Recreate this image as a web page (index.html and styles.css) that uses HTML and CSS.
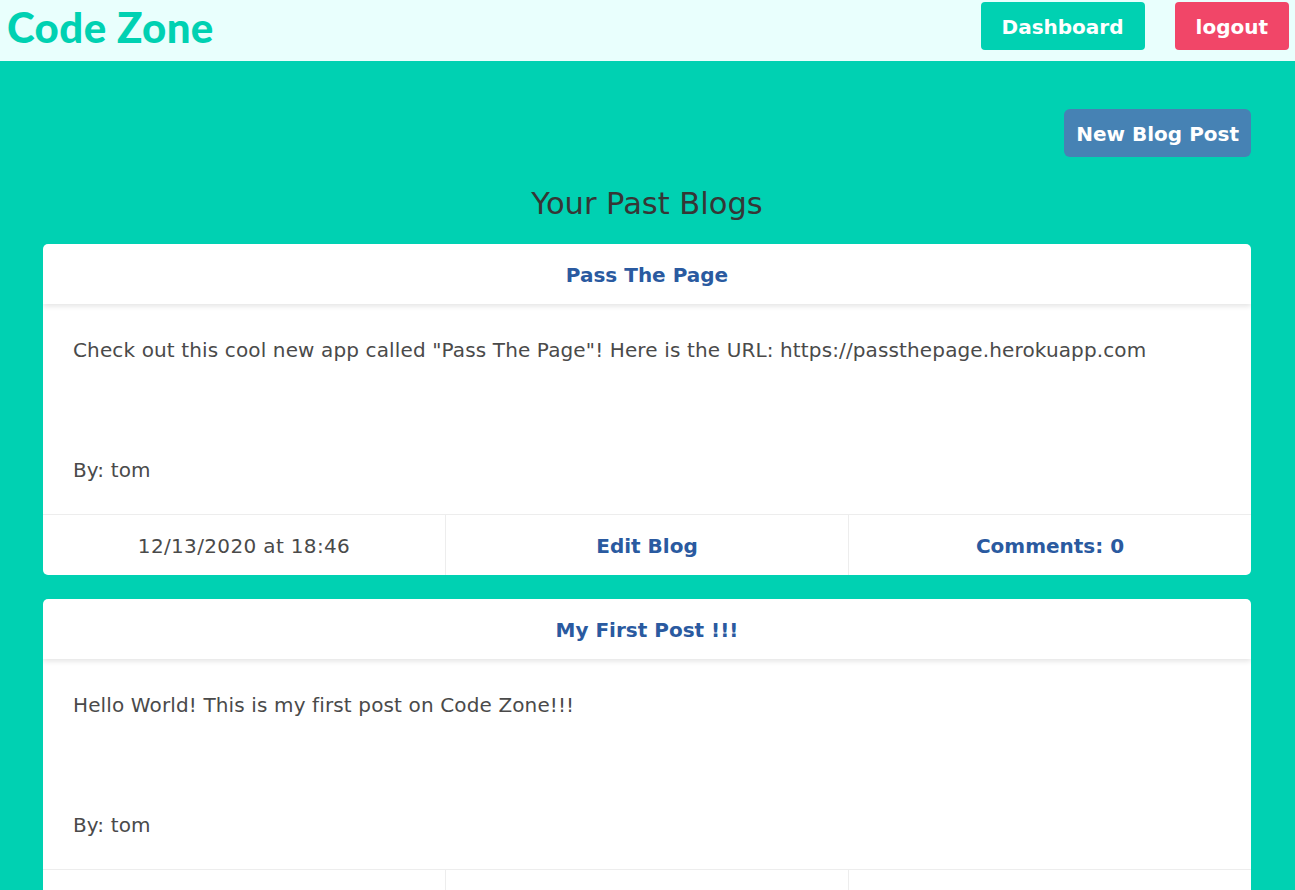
FILE: index.html
```html
<!DOCTYPE html>
<html lang="en">
<head>
<meta charset="utf-8">
<title>Code Zone</title>
<link rel="stylesheet" href="styles.css">
</head>
<body>
<nav class="navbar">
  <a class="brand" href="#">Code Zone</a>
  <div class="nav-actions">
    <a class="btn btn-primary" href="#">Dashboard</a>
    <a class="btn btn-danger" href="#">logout</a>
  </div>
</nav>
<main class="main">
  <div class="toolbar">
    <a class="btn btn-steel" href="#">New Blog Post</a>
  </div>
  <h1 class="page-title">Your Past Blogs</h1>
  <div class="cards">
    <article class="card">
      <header class="card-header">Pass The Page</header>
      <div class="card-content">
        <p class="post-body">Check out this cool new app called "Pass The Page"! Here is the URL: https://passthepage.herokuapp.com</p>
        <p class="post-author">By: tom</p>
      </div>
      <footer class="card-footer">
        <span class="footer-item">12/13/2020 at 18:46</span>
        <a class="footer-item link" href="#">Edit Blog</a>
        <a class="footer-item link" href="#">Comments: 0</a>
      </footer>
    </article>
    <article class="card">
      <header class="card-header">My First Post !!!</header>
      <div class="card-content">
        <p class="post-body">Hello World! This is my first post on Code Zone!!!</p>
        <p class="post-author">By: tom</p>
      </div>
      <footer class="card-footer">
        <span class="footer-item">12/13/2020 at 18:40</span>
        <a class="footer-item link" href="#">Edit Blog</a>
        <a class="footer-item link" href="#">Comments: 0</a>
      </footer>
    </article>
  </div>
</main>
</body>
</html>
```
FILE: styles.css
```css
html, body {
  margin: 0;
  padding: 0;
}
body {
  font-family: "DejaVu Sans", Verdana, sans-serif;
  font-size: 20px;
  line-height: 1.5;
  color: #4a4a4a;
  background: #00d1b2;
  height: 890px;
  overflow: hidden;
}
a { text-decoration: none; }

.navbar {
  height: 61px;
  box-sizing: border-box;
  background: #e9fffd;
  display: flex;
  justify-content: space-between;
  align-items: flex-start;
  padding: 0 6px 0 7px;
}
.brand {
  font-family: Lato, "DejaVu Sans", sans-serif;
  font-weight: 900;
  font-size: 42px;
  line-height: 54px;
  color: #00d1b2;
  letter-spacing: 0.4px;
}
.nav-actions {
  display: flex;
  gap: 30px;
  padding-top: 2px;
}
.btn {
  display: inline-flex;
  align-items: center;
  justify-content: center;
  height: 48px;
  box-sizing: border-box;
  border-radius: 4px;
  color: #fff;
  font-weight: 700;
  font-size: 20px;
  padding: 1px 21px 0;
}
.btn-primary { background: #00d1b2; }
.btn-danger { background: #f14668; }
.btn-steel { background: #4682b4; border-radius: 6px; padding: 2px 12px 0; }

.main {
  padding: 48px 44px 0 43px;
}
.toolbar {
  display: flex;
  justify-content: flex-end;
}
.page-title {
  margin: 25px 0 0;
  text-align: center;
  font-weight: 400;
  font-size: 30.5px;
  line-height: 44px;
  color: #363636;
}
.cards {
  margin-top: 18px;
  display: flex;
  flex-direction: column;
  gap: 24px;
}
.card {
  background: #fff;
  border-radius: 5px;
  overflow: hidden;
}
.card-header {
  height: 60px;
  display: flex;
  align-items: center;
  justify-content: center;
  font-weight: 700;
  font-size: 20px;
  padding-top: 2px;
  box-sizing: border-box;
  color: #2a5aa0;
  box-shadow: 0 2.5px 5px rgba(10, 10, 10, 0.1);
  position: relative;
}
.card-content {
  padding: 31px 30px 29px;
  letter-spacing: 0.13px;
}
.card-content p {
  margin: 0;
}
.post-author {
  margin-top: 90px !important;
}
.card-footer {
  display: flex;
  border-top: 1px solid #ededed;
}
.footer-item {
  flex: 1 1 0;
  text-align: center;
  padding: 16px 0 14px;
  color: #4a4a4a;
  letter-spacing: 0.35px;
}
.footer-item + .footer-item {
  border-left: 1px solid #ededed;
}
.footer-item.link {
  font-weight: 700;
  color: #2a5aa0;
  letter-spacing: 0;
}
```
